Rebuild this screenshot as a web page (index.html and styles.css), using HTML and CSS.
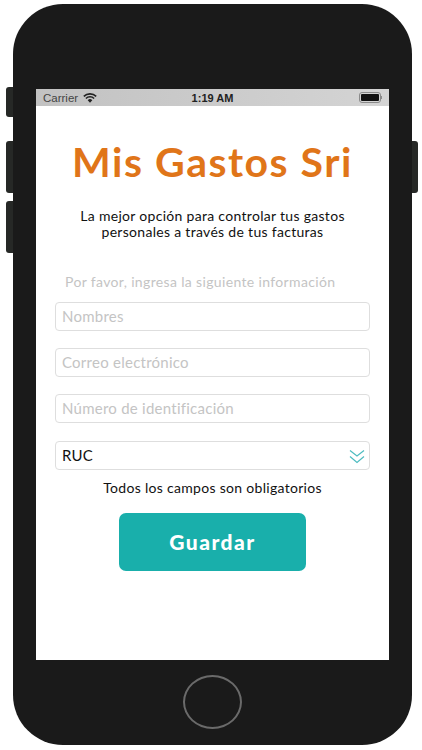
FILE: index.html
```html
<!DOCTYPE html>
<html lang="es">
<head>
    <meta charset="UTF-8">
    <meta name="viewport" content="width=device-width, initial-scale=1.0">
    <title>Mis Gastos Sri</title>
    <link rel="stylesheet" href="styles.css">
</head>
<body>
    <div class="phone">
        <div class="side side-left">
            <div class="side-btn btn-mute"></div>
            <div class="side-btn btn-volume"></div>
            <div class="side-btn btn-volume"></div>
        </div>

        <div class="device">
            <div class="screen">
                <div class="status-bar">
                    <div class="status-left">
                        <span>Carrier</span>
                        <svg class="wifi" viewBox="0 0 14 10" width="14" height="10">
                            <path d="M7 9.800 4.700 7.200a3.200 3.200 0 0 1 4.600 0z" fill="#222"/>
                            <path d="M.8 3.400a8.800 8.800 0 0 1 12.400 0M2.900 5.500a5.800 5.800 0 0 1 8.200 0" fill="none" stroke="#222" stroke-width="1.600"/>
                        </svg>
                    </div>
                    <div class="status-time">1:19 AM</div>
                    <div class="status-right">
                        <div class="battery"><div class="battery-fill"></div></div>
                        <div class="battery-tip"></div>
                    </div>
                </div>

                <div class="content">
                    <div class="app-title">Mis Gastos Sri</div>
                    <div class="tagline">La mejor opción para controlar tus gastos<br>personales a través de tus facturas</div>
                    <div class="hint">Por favor, ingresa la siguiente información</div>

                    <div class="fields">
                        <div class="field placeholder">Nombres</div>
                        <div class="field placeholder">Correo electrónico</div>
                        <div class="field placeholder">Número de identificación</div>
                        <div class="field select">
                            <span>RUC</span>
                            <svg class="chevrons" viewBox="0 0 16 15" width="16" height="15">
                                <path d="M1 1.500 8 7l7-5.500M1 7.500 8 13.500l7-6" fill="none" stroke="#4dbcc0" stroke-width="1.200"/>
                            </svg>
                        </div>
                    </div>

                    <div class="required">Todos los campos son obligatorios</div>
                    <button class="save-btn">Guardar</button>
                </div>
            </div>

            <div class="home-btn"></div>
        </div>

        <div class="side side-right">
            <div class="side-btn btn-volume"></div>
        </div>
    </div>
</body>
</html>
```

FILE: styles.css
```css
body {
    margin: 0;
    padding: 0;
    background-color: #fff;
    font-family: "Lato", "Liberation Sans", sans-serif;
}

.phone {
    display: flex;
    align-items: flex-start;
    width: 422px;
    height: 750px;
    padding: 4px 0 0 6px;
    box-sizing: border-box;
}

.side {
    display: flex;
    flex-direction: column;
    width: 7px;
    flex-shrink: 0;
}

.side-left {
    padding-top: 83px;
    gap: 24px;
}

.side-left .btn-volume + .btn-volume {
    margin-top: -16px;
}

.side-right {
    width: 6px;
    padding-top: 137px;
}

.side-btn {
    background-color: #262826;
}

.side-left .side-btn {
    border-radius: 3px 0 0 3px;
}

.side-right .side-btn {
    border-radius: 0 3px 3px 0;
}

.btn-mute {
    height: 30px;
}

.btn-volume {
    height: 52px;
}

.device {
    width: 399px;
    height: 741px;
    background-color: #1a1a1a;
    border-radius: 50px;
    padding-top: 85px;
    box-sizing: border-box;
    flex-shrink: 0;
}

.screen {
    width: 353px;
    height: 571px;
    margin: 0 auto;
    background-color: #fff;
}

.status-bar {
    display: grid;
    grid-template-columns: 1fr auto 1fr;
    align-items: center;
    height: 17px;
    padding: 0 7px;
    background: linear-gradient(to right, #c2c2c2, #d4d4d4);
    color: #444;
    font-family: "Liberation Sans", sans-serif;
    font-size: 11.500px;
}

.status-left {
    display: flex;
    align-items: center;
    gap: 5px;
}

.status-time {
    color: #222;
    font-size: 11px;
    font-weight: bold;
}

.status-right {
    display: flex;
    align-items: center;
    justify-content: flex-end;
}

.battery {
    width: 18px;
    height: 7px;
    padding: 1px;
    border: 1px solid #8a8a8a;
    border-radius: 3px;
}

.battery-fill {
    height: 100%;
    background-color: #111;
    border-radius: 1px;
}

.battery-tip {
    width: 1px;
    height: 3px;
    background-color: #8a8a8a;
}

.content {
    padding: 33px 19px 0;
    text-align: center;
}

.app-title {
    color: #e07519;
    font-size: 41px;
    font-weight: bold;
    line-height: 46px;
    letter-spacing: 1.500px;
}

.tagline {
    margin-top: 23px;
    color: #111;
    font-size: 14px;
    line-height: 16px;
    letter-spacing: 0.300px;
}

.hint {
    margin-top: 33px;
    padding-left: 10px;
    color: #c4c4c4;
    font-size: 14px;
    line-height: 18px;
    letter-spacing: 0.350px;
    text-align: left;
}

.fields {
    display: flex;
    flex-direction: column;
    gap: 17px;
    margin-top: 11px;
}

.field {
    display: flex;
    align-items: center;
    justify-content: space-between;
    height: 29px;
    padding: 0 4px 2px 6px;
    border: 1.500px solid #dedede;
    border-radius: 4px;
    box-sizing: border-box;
    font-size: 15px;
    letter-spacing: 0.250px;
    text-align: left;
}

.placeholder {
    color: #c4c4c4;
}

.select {
    margin-top: 1px;
    color: #111;
}

.chevrons {
    margin-top: 3px;
}

.required {
    margin-top: 9px;
    color: #111;
    font-size: 14px;
    line-height: 17px;
    letter-spacing: 0.300px;
}

.save-btn {
    display: block;
    width: 187px;
    height: 58px;
    margin: 17px auto 0;
    padding-bottom: 3px;
    background-color: #19afab;
    color: #fff;
    border: none;
    border-radius: 7px;
    font-family: inherit;
    font-size: 21px;
    font-weight: 900;
    letter-spacing: 1.500px;
}

.home-btn {
    width: 59px;
    height: 54px;
    margin: 15px auto 0;
    border: 2px solid #6a6a6a;
    border-radius: 50%;
    box-sizing: border-box;
}
```
